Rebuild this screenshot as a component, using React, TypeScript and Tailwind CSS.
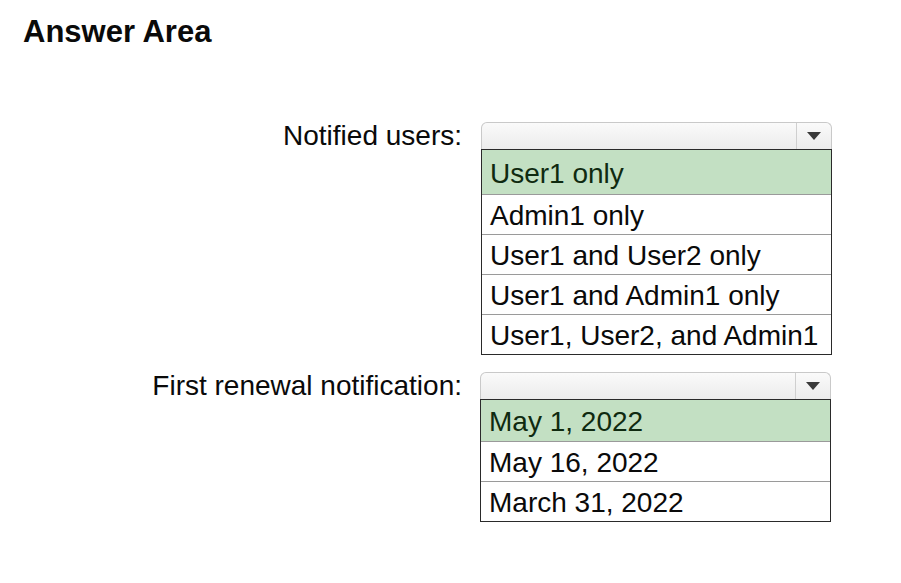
import React from 'react';

interface DropdownProps {
  options: string[];
  firstHeight: number;
}

const Dropdown = ({ options, firstHeight }: DropdownProps) => {
  return (
    <div className="w-[351px]">
      <div className="h-[27px] flex rounded-t-[6px] border border-b-0 border-[#c9c9c9] bg-gradient-to-b from-[#fafafa] to-[#ececec]">
        <div className="flex-1" />
        <div className="w-[35px] border-l border-[#cfcfcf] flex items-center justify-center">
          <svg width="14" height="8" viewBox="0 0 14 8">
            <path d="M0 0 L14 0 L7 8 Z" fill="#3a3a3a" />
          </svg>
        </div>
      </div>
      <div className="border border-[#2a2a2a] bg-white">
        {options.map((opt, i) => (
          <div
            key={opt}
            className={
              i === 0
                ? 'flex items-center pl-[8px] pt-[2px] bg-[#c3e0c3] text-[#0f2a10]'
                : 'h-[40px] flex items-center pl-[8px] pt-[1px] border-t border-[#9a9a9a] text-[#0a0a0a]'
            }
            style={i === 0 ? { height: firstHeight } : undefined}
          >
            {opt}
          </div>
        ))}
      </div>
    </div>
  );
};

export default function App() {
  return (
    <div className="w-[901px] h-[583px] bg-white font-['Liberation_Sans',Arial,sans-serif] text-[#0a0a0a]">
      <h1 className="pt-[15px] pl-[23px] text-[31px] font-bold leading-[33px]">Answer Area</h1>

      <div className="mt-[74px] flex flex-col gap-[17px] text-[28px] leading-[31px]">
        <div className="flex gap-[19px]">
          <div className="w-[462px] h-[27px] flex items-center justify-end">Notified users:</div>
          <Dropdown
            firstHeight={44}
            options={[
              'User1 only',
              'Admin1 only',
              'User1 and User2 only',
              'User1 and Admin1 only',
              'User1, User2, and Admin1',
            ]}
          />
        </div>

        <div className="flex gap-[18px]">
          <div className="w-[462px] h-[27px] flex items-center justify-end">First renewal notification:</div>
          <Dropdown firstHeight={41} options={['May 1, 2022', 'May 16, 2022', 'March 31, 2022']} />
        </div>
      </div>
    </div>
  );
}
